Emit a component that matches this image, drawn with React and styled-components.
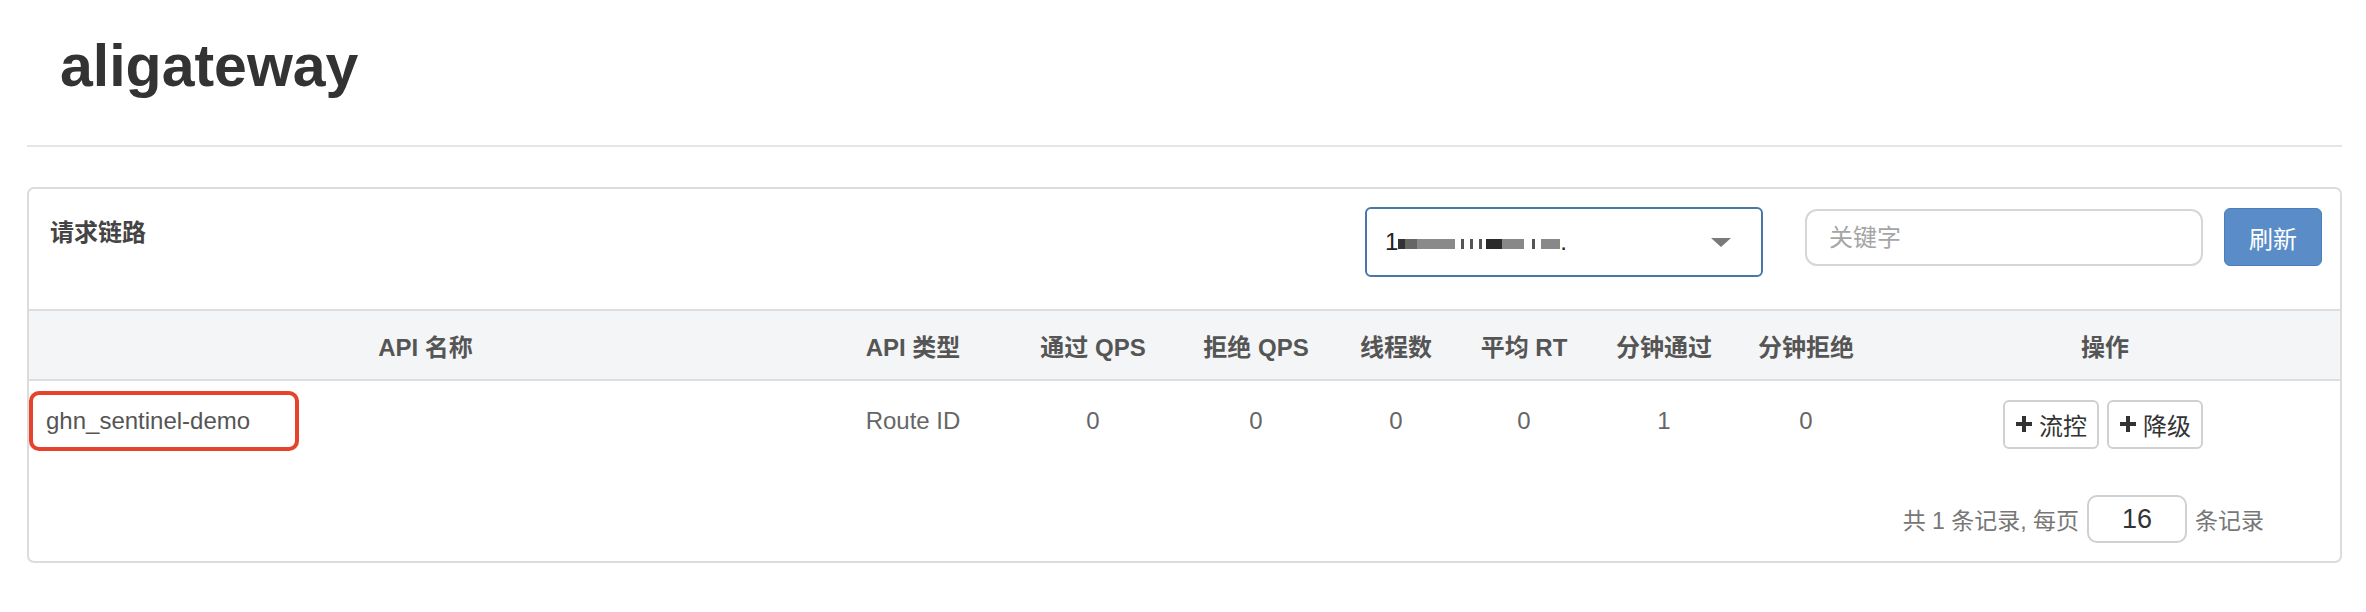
import React from "react";
import styled, { createGlobalStyle } from "styled-components";

const GlobalStyle = createGlobalStyle`
  html, body {
    margin: 0;
    padding: 0;
    background: #fff;
  }
  body {
    font-family: "Liberation Sans", Arial, "Noto Sans CJK SC", sans-serif;
    color: #333;
  }
`;

const FONT = `"Liberation Sans", Arial, "Noto Sans CJK SC", sans-serif`;

const columns = [
  { key: "name", title: "API 名称", width: 793 },
  { key: "type", title: "API 类型", width: 182 },
  { key: "passQps", title: "通过 QPS", width: 178 },
  { key: "blockQps", title: "拒绝 QPS", width: 148 },
  { key: "threads", title: "线程数", width: 132 },
  { key: "rt", title: "平均 RT", width: 124 },
  { key: "minPass", title: "分钟通过", width: 156 },
  { key: "minBlock", title: "分钟拒绝", width: 128 },
  { key: "ops", title: "操作", width: 470 },
];

const rows = [
  {
    name: "ghn_sentinel-demo",
    type: "Route ID",
    passQps: 0,
    blockQps: 0,
    threads: 0,
    rt: 0,
    minPass: 1,
    minBlock: 0,
  },
];

// redacted machine address in the select, drawn as pixel blocks
const blurBlocks = [
  { w: 7, c: "#333", gap: 0 },
  { w: 12, c: "#666", gap: 0 },
  { w: 38, c: "#8a8a8a", gap: 0 },
  { w: 3, c: "#555", gap: 6 },
  { w: 3, c: "#555", gap: 6 },
  { w: 3, c: "#555", gap: 6 },
  { w: 16, c: "#2a2a2a", gap: 4 },
  { w: 22, c: "#888", gap: 0 },
  { w: 3, c: "#555", gap: 8 },
  { w: 19, c: "#888", gap: 6 },
];

const App = () => {
  return (
    <Page>
      <GlobalStyle />
      <Title>aligateway</Title>
      <Divider />

      <Panel>
        <PanelHeader>
          <PanelTitle>请求链路</PanelTitle>
          <Controls>
            <SelectBox>
              <SelectValue>
                1
                {blurBlocks.map((b, i) => (
                  <Blur key={i} style={{ width: b.w, background: b.c, marginLeft: b.gap }} />
                ))}
                <span>.</span>
              </SelectValue>
              <Caret />
            </SelectBox>
            <SearchInput placeholder="关键字" />
            <RefreshButton>刷新</RefreshButton>
          </Controls>
        </PanelHeader>

        <Table>
          <colgroup>
            {columns.map((c) => (
              <col key={c.key} style={{ width: c.width }} />
            ))}
          </colgroup>
          <thead>
            <tr>
              {columns.map((c) => (
                <Th key={c.key}>{c.title}</Th>
              ))}
            </tr>
          </thead>
          <tbody>
            {rows.map((r) => (
              <tr key={r.name}>
                <NameCell>
                  <Highlight>{r.name}</Highlight>
                </NameCell>
                <Td>{r.type}</Td>
                <Td>{r.passQps}</Td>
                <Td>{r.blockQps}</Td>
                <Td>{r.threads}</Td>
                <Td>{r.rt}</Td>
                <Td>{r.minPass}</Td>
                <Td>{r.minBlock}</Td>
                <Td>
                  <ActionGroup>
                    <ActionButton>
                      <PlusIcon />
                      流控
                    </ActionButton>
                    <ActionButton>
                      <PlusIcon />
                      降级
                    </ActionButton>
                  </ActionGroup>
                </Td>
              </tr>
            ))}
          </tbody>
        </Table>

        <Pager>
          <PagerText>共 1 条记录, 每页</PagerText>
          <PageSize defaultValue="16" />
          <PagerText>条记录</PagerText>
        </Pager>
      </Panel>
    </Page>
  );
};

const PlusIcon = () => (
  <svg width="18" height="18" viewBox="0 0 18 18">
    <path d="M7 1h4v6h6v4h-6v6H7v-6H1V7h6z" fill="#333" />
  </svg>
);

export default App;

const Page = styled.div`
  width: 2366px;
  height: 612px;
  box-sizing: border-box;
  padding: 0 24px 0 27px;
  overflow: hidden;
`;

const Title = styled.h1`
  margin: 0;
  padding: 37px 0 0 33px;
  font-family: ${FONT};
  font-size: 59px;
  line-height: 59px;
  font-weight: 700;
  color: #333;
`;

const Divider = styled.div`
  margin-top: 49px;
  height: 2px;
  background: #e5e5e5;
`;

const Panel = styled.div`
  margin-top: 40px;
  border: 2px solid #dcdcdc;
  border-radius: 7px;
  background: #fff;
`;

const PanelHeader = styled.div`
  display: flex;
  justify-content: space-between;
  align-items: flex-start;
  height: 120px;
  padding: 0 18px 0 21px;
  border-bottom: 2px solid #dedede;
`;

const PanelTitle = styled.div`
  margin-top: 28px;
  font-family: ${FONT};
  font-size: 24px;
  line-height: 32px;
  font-weight: 700;
  color: #444;
`;

const Controls = styled.div`
  display: flex;
  align-items: flex-start;
  margin-top: 18px;
`;

const SelectBox = styled.div`
  position: relative;
  display: flex;
  align-items: center;
  box-sizing: border-box;
  width: 398px;
  height: 70px;
  padding: 0 18px;
  border: 2px solid #4b76a8;
  border-radius: 6px;
  background: #fff;
`;

const SelectValue = styled.div`
  display: flex;
  align-items: center;
  font-family: ${FONT};
  font-size: 24px;
  color: #222;
`;

const Blur = styled.span`
  display: inline-block;
  height: 10px;
  margin-top: 4px;
`;

const Caret = styled.span`
  margin-left: auto;
  margin-right: 12px;
  width: 0;
  height: 0;
  border-left: 10px solid transparent;
  border-right: 10px solid transparent;
  border-top: 9px solid #7a7a7a;
`;

const SearchInput = styled.input`
  box-sizing: border-box;
  width: 398px;
  height: 57px;
  margin-left: 42px;
  margin-top: 2px;
  padding: 0 22px;
  border: 2px solid #d6d6d6;
  border-radius: 12px;
  font-family: ${FONT};
  font-size: 24px;
  color: #555;
  outline: none;
  &::placeholder {
    color: #a5a5a5;
  }
`;

const RefreshButton = styled.button`
  box-sizing: border-box;
  width: 98px;
  height: 58px;
  margin-left: 21px;
  margin-top: 1px;
  border: 1px solid #4a7fbd;
  border-radius: 6px;
  background: #5a8cc8;
  color: #fff;
  font-family: ${FONT};
  font-size: 24px;
`;

const Table = styled.table`
  width: 100%;
  table-layout: fixed;
  border-collapse: collapse;
  font-family: ${FONT};
  font-size: 24px;
`;

const Th = styled.th`
  height: 68px;
  padding: 0;
  background: #f4f5f7;
  border-bottom: 2px solid #dedede;
  text-align: center;
  font-weight: 700;
  color: #555;
`;

const Td = styled.td`
  height: 80px;
  padding: 0;
  text-align: center;
  vertical-align: middle;
  color: #666;
`;

const NameCell = styled(Td)`
  text-align: left;
`;

const Highlight = styled.span`
  display: inline-block;
  box-sizing: border-box;
  width: 270px;
  height: 60px;
  line-height: 52px;
  padding-left: 13px;
  border: 4px solid #e5432b;
  border-radius: 10px;
  color: #555;
`;

const ActionGroup = styled.div`
  display: flex;
  justify-content: center;
  gap: 8px;
  margin-left: -4px;
  padding-top: 6px;
`;

const ActionButton = styled.button`
  display: inline-flex;
  align-items: center;
  gap: 6px;
  box-sizing: border-box;
  height: 49px;
  padding: 0 10px;
  border: 2px solid #d0d0d0;
  border-radius: 6px;
  background: #fff;
  font-family: ${FONT};
  font-size: 24px;
  color: #333;
`;

const Pager = styled.div`
  display: flex;
  justify-content: flex-end;
  align-items: center;
  gap: 8px;
  padding: 34px 76px 18px 0;
`;

const PagerText = styled.span`
  font-family: ${FONT};
  font-size: 23px;
  color: #777;
`;

const PageSize = styled.input`
  box-sizing: border-box;
  width: 100px;
  height: 48px;
  padding: 0;
  border: 2px solid #d0d0d0;
  border-radius: 10px;
  text-align: center;
  font-family: ${FONT};
  font-size: 27px;
  color: #333;
  outline: none;
`;
